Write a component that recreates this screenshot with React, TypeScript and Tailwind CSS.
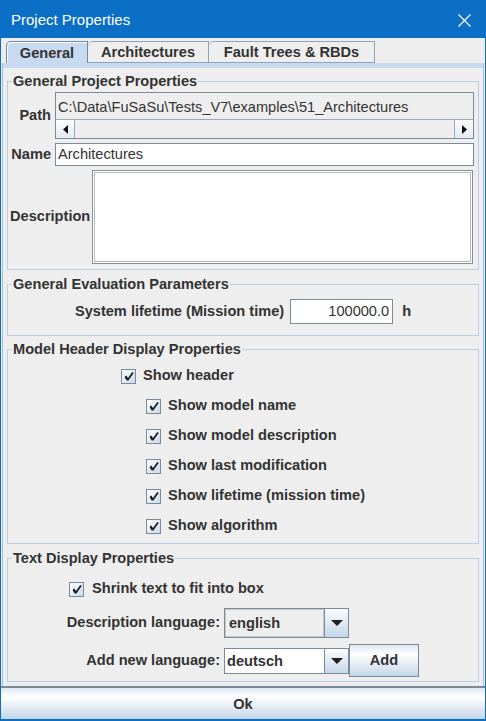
import React from "react";

const CheckBox = () => (
  <span className="flex h-[15px] w-[15px] shrink-0 items-center justify-center border border-[#7a8a99] bg-[linear-gradient(135deg,#ffffff_0%,#dde8f3_60%,#c8d8ea_100%)]">
    <svg width="10" height="10" viewBox="0 0 10 10">
      <path d="M1.5 5 L4 8.5 L9 1.5" stroke="#1f1f1f" strokeWidth="1.8" fill="none" />
      <path d="M1.5 6 L3.5 9" stroke="#1f1f1f" strokeWidth="2" fill="none" />
    </svg>
  </span>
);

const CheckRow = ({ label, indent }: { label: string; indent: string }) => (
  <div className={`flex h-[30px] items-center ${indent}`}>
    <CheckBox />
    <span className="ml-[7px] font-bold">{label}</span>
  </div>
);

const DownArrow = () => (
  <svg width="12" height="6" viewBox="0 0 12 6">
    <path d="M0 0 H12 L6 6 Z" fill="#1f1f1f" />
  </svg>
);

const Legend = ({ children }: { children: React.ReactNode }) => (
  <legend className="ml-[4px] px-[1px] leading-[16px] font-bold">{children}</legend>
);

export default function App() {
  return (
    <div className="flex h-[721px] w-[486px] flex-col bg-[#0b6fc6] font-['Liberation_Sans',Arial,sans-serif] text-[14.6px] text-[#333333]">
      {/* title bar */}
      <div className="flex h-[38px] shrink-0 items-center justify-between pl-[11px] pr-[15px] pt-[2px] text-white">
        <span className="text-[15px]">Project Properties</span>
        <svg width="13" height="13" viewBox="0 0 13 13">
          <path d="M0.5 0.5 L12.5 12.5 M12.5 0.5 L0.5 12.5" stroke="white" strokeWidth="1.2" />
        </svg>
      </div>

      <div className="mx-[1px] mb-[2px] flex flex-1 flex-col bg-[#eeeeee]">
        {/* tabs */}
        <div className="flex h-[25px] shrink-0 items-end pl-[5px]">
          <div className="flex h-[22px] w-[82px] items-center justify-center rounded-tl-[5px] border border-b-0 border-[#6b87bd] bg-[#c8daf0] pt-[2px] font-bold shadow-[inset_1px_1px_0_#ffffff]">
            General
          </div>
          <div className="flex h-[22px] w-[121px] items-center justify-center rounded-tl-[5px] border border-l-0 border-[#8ea3bc] pt-[2px] font-bold">
            Architectures
          </div>
          <div className="flex h-[22px] w-[166px] items-center justify-center rounded-tl-[5px] border border-l-0 border-[#8ea3bc] pt-[2px] font-bold">
            Fault Trees &amp; RBDs
          </div>
        </div>

        {/* tab panel */}
        <div className="mx-[1px] flex flex-1 flex-col border-x border-[#a9bfd6]">
          <div className="h-[5px] shrink-0 bg-[#c8daf0]" />
          <div className="flex flex-1 flex-col px-[4px] pt-[5px]">
            {/* General Project Properties */}
            <fieldset className="border border-[#b8cfe5] pr-[4px] pt-[3px] pb-[5px]">
              <Legend>General Project Properties</Legend>
              <div className="flex items-center">
                <span className="w-[43px] text-right font-bold">Path</span>
                <div className="ml-[4px] flex h-[47px] flex-1 flex-col border border-[#7a8a99]">
                  <div className="h-[26px] bg-[#eeeeee] pl-[2px] pt-[1px] leading-[26px]">
                    C:\Data\FuSaSu\Tests_V7\examples\51_Architectures
                  </div>
                  <div className="flex flex-1 border-t border-[#9aa9b8]">
                    <div className="flex w-[19px] items-center justify-center border-r border-[#9aa9b8] bg-[linear-gradient(to_bottom,#fdfeff,#e3ebf4)]">
                      <svg width="5" height="9" viewBox="0 0 5 9">
                        <path d="M5 0 V9 L0 4.5 Z" fill="#111" />
                      </svg>
                    </div>
                    <div className="flex-1 bg-[#eeeeee]" />
                    <div className="flex w-[19px] items-center justify-center border-l border-[#9aa9b8] bg-[linear-gradient(to_bottom,#fdfeff,#e3ebf4)]">
                      <svg width="5" height="9" viewBox="0 0 5 9">
                        <path d="M0 0 V9 L5 4.5 Z" fill="#111" />
                      </svg>
                    </div>
                  </div>
                </div>
              </div>
              <div className="mt-[4px] flex items-center">
                <span className="w-[43px] text-right font-bold">Name</span>
                <div className="ml-[4px] h-[23px] flex-1 border border-[#7a8a99] bg-white pl-[2px] leading-[21px]">
                  Architectures
                </div>
              </div>
              <div className="mt-[4px] flex items-center">
                <span className="ml-[2px] w-[82px] font-bold">Description</span>
                <div className="mr-[1px] h-[94px] flex-1 border border-[#8a8f95] bg-white shadow-[inset_0_0_0_1px_#ffffff,inset_0_0_0_2px_#b5b9bd]" />
              </div>
            </fieldset>

            {/* General Evaluation Parameters */}
            <fieldset className="mt-[6px] border border-[#b8cfe5] pt-[7px] pb-[11px]">
              <Legend>General Evaluation Parameters</Legend>
              <div className="flex items-center justify-center">
                <span className="font-bold">System lifetime (Mission time)</span>
                <div className="ml-[6px] h-[25px] w-[103px] border border-[#7a8a99] bg-white pr-[3px] text-right leading-[23px]">
                  100000.0
                </div>
                <span className="ml-[9px] font-bold">h</span>
              </div>
            </fieldset>

            {/* Model Header Display Properties */}
            <fieldset className="mt-[5px] border border-[#b8cfe5] pt-[4px] pb-[2px]">
              <Legend>Model Header Display Properties</Legend>
              <CheckRow label="Show header" indent="pl-[113px]" />
              <CheckRow label="Show model name" indent="pl-[138px]" />
              <CheckRow label="Show model description" indent="pl-[138px]" />
              <CheckRow label="Show last modification" indent="pl-[138px]" />
              <CheckRow label="Show lifetime (mission time)" indent="pl-[138px]" />
              <CheckRow label="Show algorithm" indent="pl-[138px]" />
            </fieldset>

            {/* Text Display Properties */}
            <fieldset className="mt-[6px] border border-[#b8cfe5] pt-[13px] pb-[4px]">
              <Legend>Text Display Properties</Legend>
              <div className="flex h-[20px] items-center pl-[61px]">
                <CheckBox />
                <span className="ml-[8px] font-bold">Shrink text to fit into box</span>
              </div>
              <div className="mt-[9px] flex items-center">
                <span className="w-[212px] text-right font-bold">Description language:</span>
                <div className="ml-[4px] flex h-[30px] w-[125px] border border-[#7a8a99]">
                  <div className="flex-1 border border-[#c3c9cf] bg-[#eeeeee] pl-[3px] leading-[26px] font-bold">
                    english
                  </div>
                  <div className="flex w-[24px] items-center justify-center border-l border-[#7a8a99] bg-[linear-gradient(to_bottom,#fbfdff,#c5d6e9)]">
                    <DownArrow />
                  </div>
                </div>
              </div>
              <div className="mt-[6px] flex h-[33px] items-center">
                <span className="w-[212px] text-right font-bold">Add new language:</span>
                <div className="ml-[4px] flex h-[26px] w-[125px] border border-[#7a8a99]">
                  <div className="flex-1 bg-white pl-[2px] leading-[24px] font-bold">deutsch</div>
                  <div className="flex w-[24px] items-center justify-center border-l border-[#7a8a99] bg-[linear-gradient(to_bottom,#fbfdff,#c5d6e9)]">
                    <DownArrow />
                  </div>
                </div>
                <div className="flex h-[33px] w-[70px] items-center justify-center border border-[#7a8a99] bg-[linear-gradient(to_bottom,#dde8f3_0%,#ffffff_30%,#c4d6e9_100%)] font-bold">
                  Add
                </div>
              </div>
            </fieldset>
          </div>
        </div>

        {/* Ok button */}
        <div className="flex h-[33px] shrink-0 items-center justify-center border-t-2 border-[#7a8a99] bg-[linear-gradient(to_bottom,#dde8f3_0%,#ffffff_30%,#c4d6e9_100%)] pt-[2px] font-bold">
          Ok
        </div>
      </div>
    </div>
  );
}
